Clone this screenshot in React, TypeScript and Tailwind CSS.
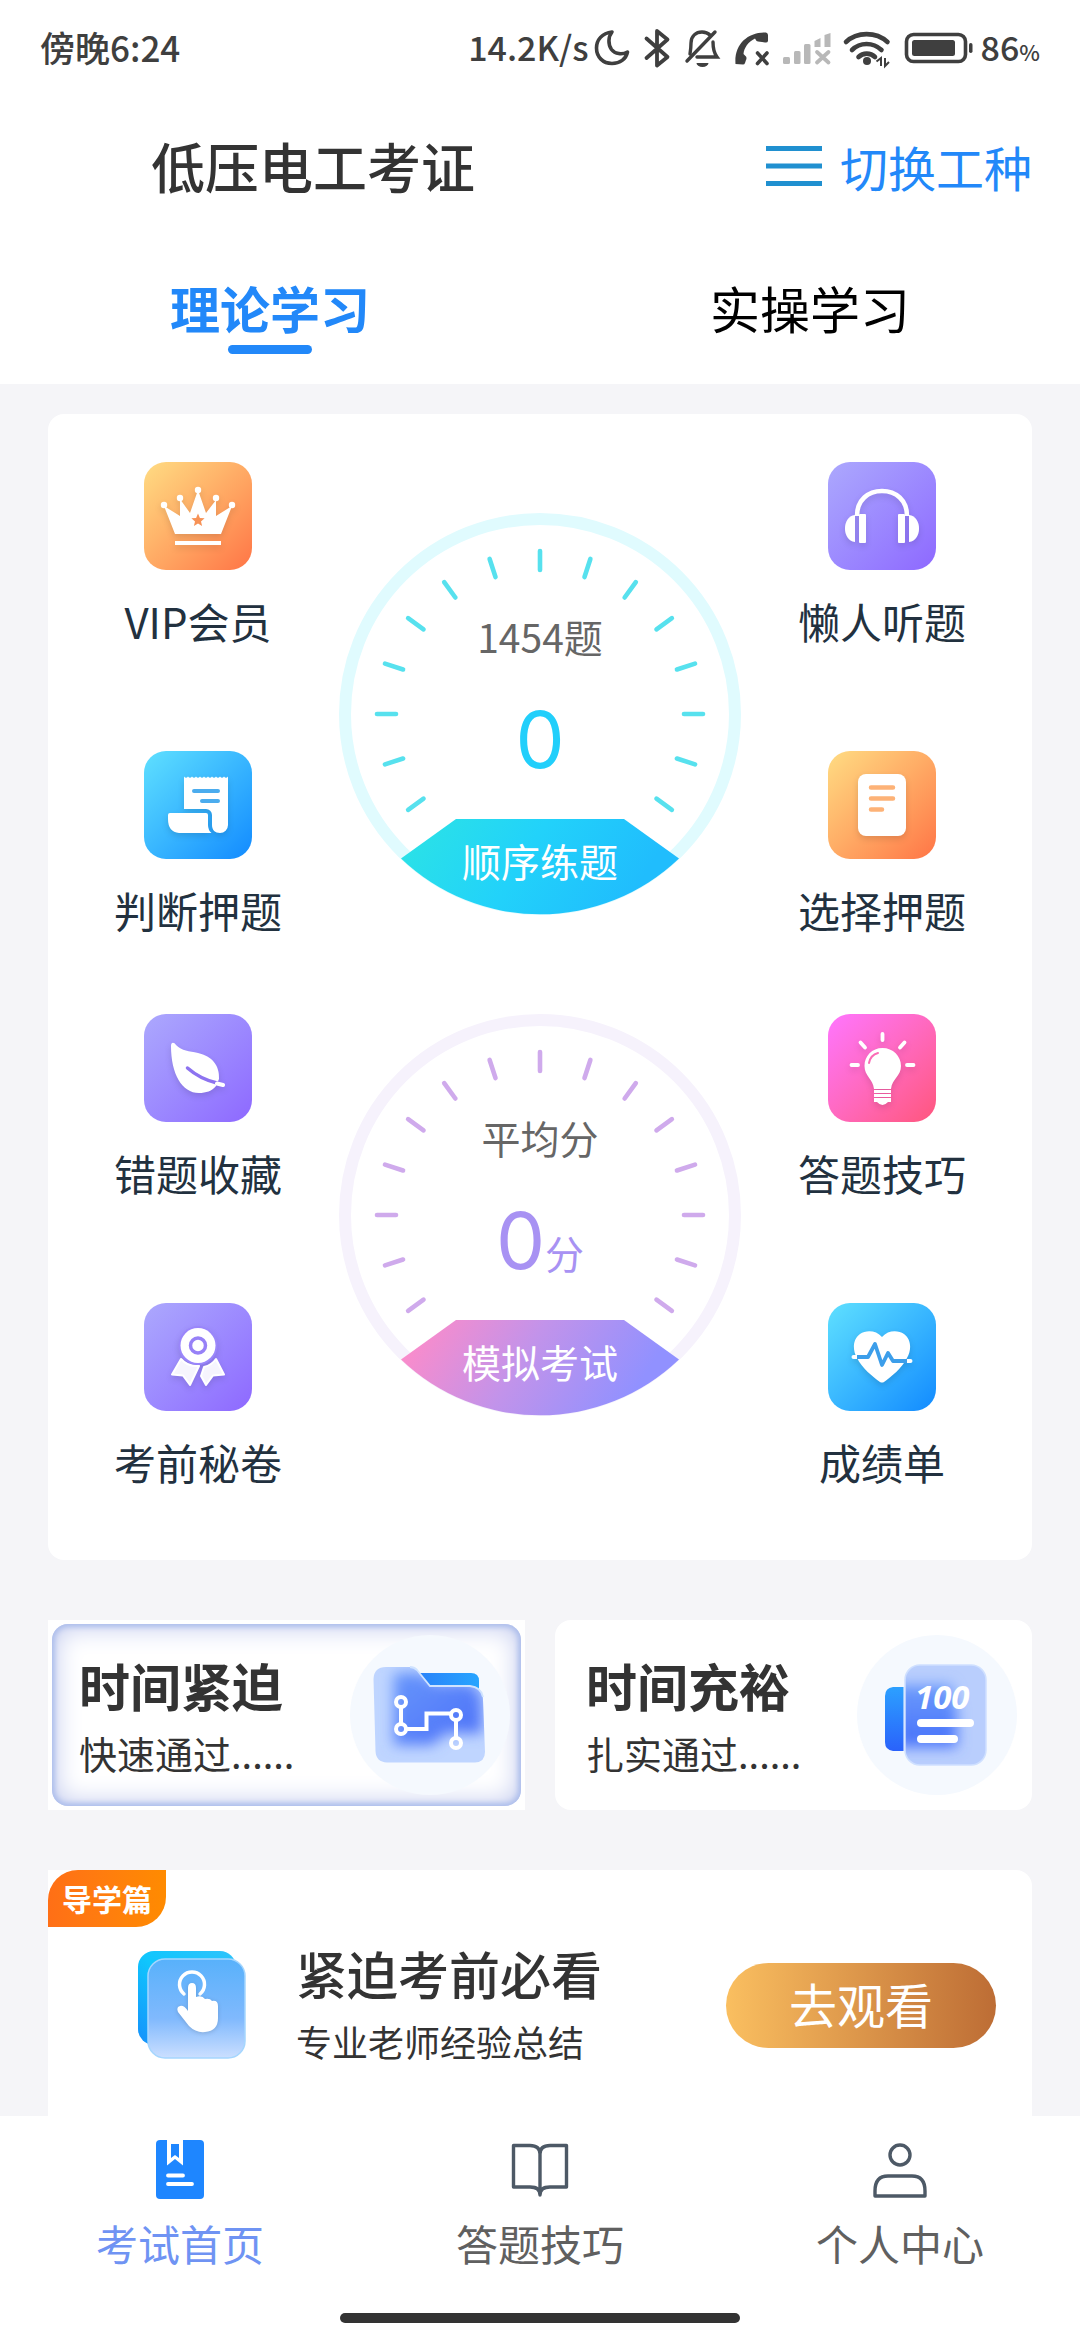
import type { ReactNode } from 'react';
import clsx from 'clsx';

interface Tile {
  label: string;
  background: string;
  glyph: ReactNode;
}

/* ---------- Tile glyphs, drawn on a 108 x 108 grid ---------- */

const CrownGlyph = (
  <>
    <g fill="#fff">
      <circle cx="20" cy="43" r="3.2" />
      <circle cx="36" cy="36" r="3.2" />
      <circle cx="54" cy="28" r="3.2" />
      <circle cx="72" cy="36" r="3.2" />
      <circle cx="88" cy="43" r="3.2" />
      <path d="M20 44 31 72H77L88 44 72 54V38L62 51 54 28 46 51 36 37V54Z" />
      <rect x="31" y="79" width="46" height="4" />
    </g>
    <path
      d="m54 51.5 1.9 4.4 4.7.4-3.6 3.1 1.1 4.6-4.1-2.4-4.1 2.4 1.1-4.6-3.6-3.1 4.7-.4Z"
      fill="#f79256"
    />
  </>
);

const TORN_EDGE = 'q2 2.5 4 0'.repeat(11);

const ReceiptGlyph = (
  <>
    <g fill="#fff">
      <path d={`M40 25.5${TORN_EDGE}V74a8 8 0 0 1-8 8c-5 0-8-3-8-8V64a6 6 0 0 0-6-6H40Z`} />
      <path d="M24 64q0-2 2-2H62q2 0 2 2V74q0 5 3.5 8H35Q24 81 24 68Z" />
    </g>
    <path d="M50 40H74M58 50H74" stroke="#4bacee" strokeWidth="4" strokeLinecap="round" />
  </>
);

const LeafGlyph = (
  <>
    <path
      d="M27 32c0-4 3-4 5-1 6 6 13 6 22 8C68 42 76 52 75 65L72 72C68 77 62 79 55 79 38 79 27 60 27 32Z"
      fill="#fff"
    />
    <path d="M43.5 54Q56 65 73 69" stroke="#8d73f0" strokeWidth="3.5" strokeLinecap="round" fill="none" />
    <path d="M73 69.5 79 71" stroke="#fff" strokeWidth="4" strokeLinecap="round" />
  </>
);

const MedalGlyph = (
  <>
    <g fill="#fff" stroke="#fff" strokeWidth="2" strokeLinejoin="round">
      <path d="M37 56 28 71.5 39 72.5 46 82 55 63Q44 64 37 56Z" fillOpacity=".92" />
      <path d="M72 56 80 71.5 69 72.5 62 82 57 73 60 64Q68 62 72 56Z" fillOpacity=".92" />
    </g>
    <circle cx="54" cy="42.5" r="19.5" fill="#9a86fb" />
    <circle cx="54" cy="42.5" r="17.5" fill="#fff" />
    <circle cx="54" cy="42.5" r="7.5" fill="none" stroke="#9781f7" strokeWidth="3.5" />
  </>
);

const HeadphoneGlyph = (
  <>
    <path d="M29 54C29 38 40 29 54 29S79 38 79 54" stroke="#fff" strokeWidth="4.5" fill="none" />
    <g fill="#fff">
      <path d="M27 53C20 54 17 60 17 66.5S20 79 27 80Z" />
      <rect x="31" y="52" width="7" height="29" rx="1" />
      <rect x="70" y="52" width="7" height="29" rx="1" />
      <path d="M81 53C88 54 91 60 91 66.5S88 79 81 80Z" />
    </g>
  </>
);

const PaperGlyph = (
  <>
    <rect x="30" y="23" width="48" height="62" rx="8" fill="#fff" />
    <path d="M43 36.5H65M43 47.5H65M43 58.5H54" stroke="#fdb277" strokeWidth="4.5" strokeLinecap="round" />
  </>
);

const BulbGlyph = (
  <>
    <g fill="#fff">
      <path d="M54.5 34C65 34 73 42 73 52 73 62 64 65 63 75H46C45 65 36.5 62 36.5 52 36.5 42 44 34 54.5 34Z" />
      <rect x="46" y="76" width="17" height="3" />
      <rect x="46" y="80" width="17" height="3" />
      <path d="M46 84H63V88H60Q54.5 94 49 88H46Z" />
    </g>
    <path
      d="M54.5 20V26M32.5 28.5 37 33.5M76.5 28.5 72 33.5M23.5 51H30M79 51H85.5"
      stroke="#fff"
      strokeWidth="3.8"
      strokeLinecap="round"
    />
    <path d="M41 49Q42.5 41 50 39" stroke="#fb6cb6" strokeWidth="2" strokeLinecap="round" fill="none" />
  </>
);

const HeartGlyph = (
  <>
    <path
      d="M54 34C60 27 70 27 76 31 83 36 84 46 79 55 74 65 63 74 56 79Q54 80 52 79C45 74 34 65 29 55 24 46 25 36 32 31 38 27 48 27 54 34Z"
      fill="#fff"
    />
    <path d="M25.5 54H30M79 58H82.5" stroke="#fff" strokeWidth="4" strokeLinecap="round" />
    <path d="M29 54H40L47 41 54 62 60 50 65 58H79" stroke="#3c9eea" strokeWidth="3.8" strokeLinejoin="round" fill="none" />
  </>
);

const ORANGE = 'from-[#ffdc83] to-[#ff7446]';
const BLUE = 'from-[#5fe0ff] to-[#128aff]';
const PURPLE = 'from-[#aca8fd] to-[#8e68ff]';
const PINK = 'from-[#ff75ff] to-[#ff557c]';

const LEFT_TILES: Tile[][] = [
  [
    { label: 'VIP会员', background: ORANGE, glyph: CrownGlyph },
    { label: '判断押题', background: BLUE, glyph: ReceiptGlyph },
  ],
  [
    { label: '错题收藏', background: PURPLE, glyph: LeafGlyph },
    { label: '考前秘卷', background: PURPLE, glyph: MedalGlyph },
  ],
];

const RIGHT_TILES: Tile[][] = [
  [
    { label: '懒人听题', background: PURPLE, glyph: HeadphoneGlyph },
    { label: '选择押题', background: ORANGE, glyph: PaperGlyph },
  ],
  [
    { label: '答题技巧', background: PINK, glyph: BulbGlyph },
    { label: '成绩单', background: BLUE, glyph: HeartGlyph },
  ],
];

function TileColumn({ groups }: Readonly<{ groups: Tile[][] }>) {
  return (
    <div className="flex w-48 flex-col gap-[73px]">
      {groups.map((group) => (
        <div key={group[0].label} className="flex flex-col gap-[99px]">
          {group.map((tile) => (
            <button key={tile.label} type="button" className="flex flex-col items-center gap-5">
              <span className={clsx('block size-[108px] rounded-[22px] bg-linear-to-br', tile.background)}>
                <svg viewBox="0 0 108 108" className="size-full drop-shadow-md" fill="none" aria-hidden="true">
                  {tile.glyph}
                </svg>
              </span>
              <span className="text-[42px] leading-[62px] whitespace-nowrap text-[#22313f]">{tile.label}</span>
            </button>
          ))}
        </div>
      ))}
    </div>
  );
}

/* ---------- Dials ---------- */

const TICKS = Array.from({ length: 15 }, (_, i) => (i - 7) * 18);

interface DialProps {
  id: string;
  caption: string;
  action: string;
  ring: string;
  tick: string;
  stops: [string, string, string];
  children: ReactNode;
}

function Dial({ id, caption, action, ring, tick, stops, children }: Readonly<DialProps>) {
  return (
    <button type="button" className="relative flex size-[402px] flex-col items-center pt-[93px]">
      <svg viewBox="-201 -201 402 402" className="absolute inset-0 size-full" aria-hidden="true">
        <defs>
          <linearGradient id={id} gradientUnits="userSpaceOnUse" x1="-110" y1="80" x2="80" y2="200">
            <stop offset="0" stopColor={stops[0]} />
            <stop offset=".5" stopColor={stops[1]} />
            <stop offset="1" stopColor={stops[2]} />
          </linearGradient>
        </defs>
        <circle r="195" fill="none" stroke={ring} strokeWidth="12" />
        {TICKS.map((angle) => (
          <path
            key={angle}
            d="M0-163V-144"
            transform={`rotate(${angle})`}
            stroke={tick}
            strokeWidth="4.6"
            strokeLinecap="round"
          />
        ))}
        <path d="M-84 105H84L139 144.5A201 201 0 0 1-139 144.5Z" fill={`url(#${id})`} />
      </svg>
      <span className="relative text-[39px] leading-[60px] text-[#666]">{caption}</span>
      <span className="relative mt-[14px] flex h-[120px] items-baseline leading-[120px]">{children}</span>
      <span className="relative mt-[30px] text-[39px] leading-[60px] text-white">{action}</span>
    </button>
  );
}

/* ---------- Status bar ---------- */

function StatusIcons() {
  return (
    <svg viewBox="592 26 384 44" className="h-11 w-96" fill="none" stroke="#3f3f3f" aria-hidden="true">
      {/* Moon */}
      <path
        d="M611 32C601 33 595.5 40 595.5 48 595.5 57 602 63.5 611 63.5 619 63.5 625 59 626.5 52 621 55 614 54 610.5 49.5 607 44.5 607 37 611 32Z"
        strokeWidth="3.6"
        strokeLinejoin="round"
      />
      {/* Bluetooth */}
      <path
        d="M645.5 38.5 666.5 57 656 65.5V31L666.5 39.5 645.5 58"
        strokeWidth="3.8"
        strokeLinejoin="round"
        strokeLinecap="round"
      />
      {/* Muted bell */}
      <path
        d="M689 54Q690 48 690 43C690 36 695 32 701 32 705 32 707 33 709 35M712 42C712 50 713 53 716 57H696"
        strokeWidth="3.4"
        strokeLinecap="round"
      />
      <path d="M714 32 686 61" strokeWidth="3.4" strokeLinecap="round" />
      <path d="M695.5 63H707.5A6 4 0 0 1 695.5 63Z" fill="#3f3f3f" stroke="none" />
      {/* Blocked call */}
      <path
        d="M734.5 64C733 44 747 32 765 32.5Q767 33 767 35V41Q766.5 43 764 42.5L757 41.5Q755 41 754 38.5C747 42 743 48 742.5 54L745 56.5Q746 58 745 60L744 63Q743.5 64.5 742 64.5Z"
        fill="#3f3f3f"
        stroke="none"
      />
      <path d="M756.5 53 766 63.5M766 53 756.5 63.5" strokeWidth="3.6" strokeLinecap="round" />
      {/* No signal */}
      <g fill="#b8b8b8" stroke="none">
        <rect x="782" y="57" width="7" height="7" rx="1.5" />
        <rect x="793" y="51" width="6.5" height="13" rx="1.5" />
        <rect x="803" y="44" width="6.5" height="20" rx="1.5" />
        <path d="M813.5 41 819.5 38V47H813.5ZM823.5 35 829.5 33V47H823.5Z" />
      </g>
      <path d="M816 52 827.5 62.5M827.5 52 816 62.5" stroke="#b8b8b8" strokeWidth="3.8" strokeLinecap="round" />
      {/* Wifi */}
      <path
        d="M845 42C856 31.5 875 31.5 886.5 42M851 50C859 42 872 42 880.5 50M857.5 57C862 52.5 869.5 52.5 874 57"
        strokeWidth="4.6"
        strokeLinecap="round"
      />
      <circle cx="866" cy="61" r="4" fill="#3f3f3f" stroke="none" />
      <path d="M880 66V58L875.5 61.5M884 58V66L888 62" strokeWidth="2" />
      {/* Battery */}
      <rect x="905.5" y="34.5" width="59" height="27" rx="7" strokeWidth="3.6" />
      <rect x="911" y="40" width="43" height="16" rx="2.5" fill="#3f3f3f" stroke="none" />
      <rect x="968" y="43" width="3.5" height="10" rx="1.7" fill="#3f3f3f" stroke="none" />
    </svg>
  );
}

function StatusBar() {
  return (
    <div className="flex h-[98px] items-start justify-between px-10 pt-[22px] leading-[50px] font-medium text-[#3f3f3f]">
      <span className="text-[35px]">傍晚6:24</span>
      <span className="flex items-start gap-1 text-[34px]">
        <span>14.2K/s</span>
        <span className="pt-1">
          <StatusIcons />
        </span>
        <span>
          86<span className="text-[22px] leading-none">%</span>
        </span>
      </span>
    </div>
  );
}

/* ---------- Plan cards ---------- */

function FolderArt() {
  return (
    <svg viewBox="0 0 160 160" className="size-40 shrink-0" fill="none" aria-hidden="true">
      <defs>
        <linearGradient id="folder-back" x1="0" y1="0" x2="1" y2="0">
          <stop offset="0" stopColor="#2a7df8" />
          <stop offset="1" stopColor="#27a5ff" />
        </linearGradient>
        <linearGradient id="folder-core" x1="0" y1="0" x2="1" y2="1">
          <stop offset="0" stopColor="#6796fb" />
          <stop offset="1" stopColor="#4b6ff8" />
        </linearGradient>
        <filter id="folder-glow" x="-50%" y="-50%" width="200%" height="200%">
          <feGaussianBlur stdDeviation="7" />
        </filter>
        <clipPath id="folder-front">
          <path d="M36 32H60Q64 32 67 35L80 51H120Q133 52 133 65L135 117Q135 127 125 127.5H37Q26 127 25.5 116L23.5 44Q24 32 36 32Z" />
        </clipPath>
      </defs>
      <circle cx="80" cy="80" r="80" fill="#f5f9fe" />
      <path d="M60 38H121Q129 38 129 46V60H60Z" fill="url(#folder-back)" />
      <g clipPath="url(#folder-front)">
        <rect x="20" y="28" width="120" height="104" fill="#bfd5ff" />
        <path d="M44 38H72L84 48H122L132 62V98H96L82 110H44Z" fill="url(#folder-core)" filter="url(#folder-glow)" />
      </g>
      <path d="M60 32Q64 32 67 35L80 51H120Q131 52 133 62" stroke="#cfe3ff" strokeWidth="1.8" />
      <g stroke="#fff" strokeWidth="4">
        <path d="M51 72V89M56 94H76.5V78.5H101M106 85V103" />
        <circle cx="51" cy="67" r="5" />
        <circle cx="51" cy="94" r="5" />
        <circle cx="106" cy="80" r="5" />
        <circle cx="106" cy="108" r="5" />
      </g>
    </svg>
  );
}

function ScoreArt() {
  return (
    <svg viewBox="0 0 160 160" className="size-40 shrink-0" fill="none" aria-hidden="true">
      <defs>
        <linearGradient id="score-back" x1="0" y1="0" x2="0" y2="1">
          <stop offset="0" stopColor="#2ca0ff" />
          <stop offset="1" stopColor="#2a62fb" />
        </linearGradient>
        <linearGradient id="score-core" x1="0" y1="0" x2="0" y2="1">
          <stop offset="0" stopColor="#6c9bfb" />
          <stop offset="1" stopColor="#4670fa" />
        </linearGradient>
        <filter id="score-glow" x="-50%" y="-50%" width="200%" height="200%">
          <feGaussianBlur stdDeviation="7" />
        </filter>
        <clipPath id="score-front">
          <rect x="48" y="30" width="81" height="100" rx="15" />
        </clipPath>
      </defs>
      <circle cx="80" cy="80" r="80" fill="#f5f9fe" />
      <path d="M36 52H46.5V116H36Q28 115 28 107V61Q28 53 36 52Z" fill="url(#score-back)" />
      <g clipPath="url(#score-front)">
        <rect x="46" y="28" width="86" height="104" fill="#b9cefd" />
        <path d="M38 50H94L100 76V112H38Z" fill="url(#score-core)" filter="url(#score-glow)" />
      </g>
      <rect x="48" y="30" width="81" height="100" rx="15" stroke="#cfe0ff" strokeWidth="1.5" />
      <text x="58" y="74" fill="#fff" className="font-['Open_Sans',sans-serif] text-[33px] font-bold italic">
        100
      </text>
      <path d="M64 88H113M64 104H97" stroke="#fff" strokeWidth="8" strokeLinecap="round" />
    </svg>
  );
}

interface PlanCardProps {
  title: string;
  hint: string;
  art: ReactNode;
  active?: boolean;
}

function PlanCard({ title, hint, art, active }: Readonly<PlanCardProps>) {
  return (
    <button type="button" className={clsx('flex-1 bg-white p-1 text-left', !active && 'rounded-2xl')}>
      <span
        className={clsx(
          'flex items-center justify-between rounded-2xl py-[11px] pr-[11px] pl-[27px]',
          active && 'shadow-[inset_0_0_5px_3px_#aebfec,inset_0_0_26px_4px_#c3cbee]',
        )}
      >
        <span className="flex flex-col pt-1">
          <span className="text-[51px] leading-[72px] font-bold text-[#333]">{title}</span>
          <span className="text-[38px] leading-[64px] text-[#333]">{hint}</span>
        </span>
        {art}
      </span>
    </button>
  );
}

/* ---------- Guide card ---------- */

function TapArt() {
  return (
    <svg viewBox="0 0 108 108" className="size-[108px] shrink-0" fill="none" aria-hidden="true">
      <defs>
        <linearGradient id="tap-back" x1="1" y1="0" x2="0" y2="1">
          <stop offset="0" stopColor="#2fc3fb" />
          <stop offset=".5" stopColor="#10c6fd" />
          <stop offset="1" stopColor="#1590fb" />
        </linearGradient>
        <linearGradient id="tap-front" x1="0" y1="0" x2="0" y2="1">
          <stop offset="0" stopColor="#58b1fb" />
          <stop offset=".6" stopColor="#80b9fd" />
          <stop offset="1" stopColor="#cbdfff" />
        </linearGradient>
      </defs>
      <rect x="0" y="0" width="98" height="94" rx="16" fill="url(#tap-back)" />
      <rect x="10" y="8" width="97" height="99" rx="17" fill="url(#tap-front)" stroke="#a5d6fe" strokeWidth="1.5" />
      <path d="M46 43A12.5 12.5 0 1 1 62 43" stroke="#fff" strokeWidth="3.5" strokeLinecap="round" />
      <path
        d="M50 37Q50 32 54 32T58 37V46Q64 44 67 48 72 47 74 50 80 49 80 55V67Q80 80 67 81 58 82 51 75L40 61Q38 56 42 55 46 54 50 60Z"
        fill="#fff"
        className="drop-shadow-sm"
      />
    </svg>
  );
}

function GuideCard() {
  return (
    <section className="flex flex-col rounded-2xl rounded-tl-none bg-white pb-20">
      <span className="self-start rounded-tl-[30px] rounded-br-[30px] bg-linear-to-r from-[#ff6f16] to-[#ff8b00] px-[14px] text-[30px] leading-[57px] font-bold text-white">
        导学篇
      </span>
      <div className="mt-[10px] flex items-center pr-9 pl-[90px]">
        <TapArt />
        <div className="ml-[50px] flex flex-1 flex-col">
          <h2 className="text-[51px] leading-[72px] font-medium text-[#333]">紧迫考前必看</h2>
          <p className="text-[36px] leading-[64px] text-[#333]">专业老师经验总结</p>
        </div>
        <button
          type="button"
          className="h-[85px] w-[270px] rounded-full bg-linear-to-r from-[#fabf60] to-[#bd6d35] pb-1 text-[48px] leading-[80px] text-white"
        >
          去观看
        </button>
      </div>
    </section>
  );
}

/* ---------- Bottom navigation ---------- */

const NAV_ITEMS = [
  {
    label: '考试首页',
    active: true,
    icon: (
      <>
        <rect x="6" y="0" width="48" height="59" rx="4" fill="#1e86ff" />
        <path d="M17 0H33V25.5L25 19 17 25.5Z" fill="#fff" />
        <path d="M21 4H29V18L25 15 21 18Z" fill="#1e86ff" />
        <path d="M18 35.5H33M18 44H42" stroke="#fff" strokeWidth="3.8" strokeLinecap="round" />
      </>
    ),
  },
  {
    label: '答题技巧',
    active: false,
    icon: (
      <path
        d="M30 53V14Q30 5.5 20 5.5H3.5V47H20Q30 47 30 55Q30 47 40 47H56.5V5.5H40Q30 5.5 30 14"
        stroke="#4d5966"
        strokeWidth="3.4"
        strokeLinejoin="round"
      />
    ),
  },
  {
    label: '个人中心',
    active: false,
    icon: (
      <g stroke="#4d5966" strokeWidth="3.4" strokeLinejoin="round">
        <circle cx="30" cy="15" r="10" />
        <path d="M5 56V51Q5 36 18 36H42Q55 36 55 51V56Z" />
      </g>
    ),
  },
];

function BottomNav() {
  return (
    <nav className="bg-white pt-6 pb-[17px]">
      <div className="grid grid-cols-3">
        {NAV_ITEMS.map((item) => (
          <a key={item.label} href="#" className="flex flex-col items-center gap-[13px]">
            <svg viewBox="0 0 60 60" className="size-15" fill="none" aria-hidden="true">
              {item.icon}
            </svg>
            <span className={clsx('text-[42px] leading-[60px]', item.active ? 'text-[#6f93f3]' : 'text-[#606060]')}>
              {item.label}
            </span>
          </a>
        ))}
      </div>
      <div className="mx-auto mt-10 h-[10px] w-[37%] rounded-full bg-[#333]" />
    </nav>
  );
}

export default function App() {
  return (
    <div className="flex h-screen flex-col bg-[#f5f5f8] font-['Noto_Sans_CJK_SC',sans-serif]">
      <header className="bg-white">
        <StatusBar />
        <div className="flex h-[140px] items-center justify-between pr-12 pb-1 pl-[151px]">
          <h1 className="text-[54px] leading-[80px] font-medium text-[#333]">低压电工考证</h1>
          <button type="button" className="flex items-center gap-[18px] text-[48px] leading-[70px] text-[#2288f9]">
            <svg viewBox="0 0 56 40" className="h-10 w-14" aria-hidden="true">
              <path d="M0 2.5H56M0 20H56M0 37.5H56" stroke="#2090d0" strokeWidth="5" />
            </svg>
            切换工种
          </button>
        </div>
        <div className="grid grid-cols-2 pt-[37px] pb-[30px] text-[50px] leading-[64px]">
          <button type="button" className="flex flex-col items-center gap-[6px] font-bold text-[#2288f9]">
            理论学习
            <span className="h-[9px] w-[84px] rounded-full bg-[#2288f9]" />
          </button>
          <button type="button" className="flex flex-col items-center text-black">
            实操学习
          </button>
        </div>
      </header>

      <main className="flex min-h-0 flex-1 flex-col gap-[60px] overflow-y-auto px-12 pt-[30px] [scrollbar-width:none]">
        <section className="flex shrink-0 items-start justify-between rounded-2xl bg-white px-[54px] pt-12 pb-[67px]">
          <TileColumn groups={LEFT_TILES} />
          <div className="-mx-6 flex flex-col gap-[99px] pt-[51px]">
            <Dial
              id="practice"
              caption="1454题"
              action="顺序练题"
              ring="#e0fbfe"
              tick="#57e1ee"
              stops={['#2be2e6', '#22d2fa', '#20bdfd']}
            >
              <span className="font-['Inter',sans-serif] text-[78px] text-[#22cffb]">0</span>
            </Dial>
            <Dial
              id="exam"
              caption="平均分"
              action="模拟考试"
              ring="#f6f2fc"
              tick="#cfaaec"
              stops={['#ff8bc8', '#c293ea', '#9191ff']}
            >
              <span className="font-['Inter',sans-serif] text-[78px] text-[#a892f3]">0</span>
              <span className="text-[39px] text-[#a892f3]">分</span>
            </Dial>
          </div>
          <TileColumn groups={RIGHT_TILES} />
        </section>

        <section className="flex shrink-0 gap-[30px]">
          <PlanCard title="时间紧迫" hint="快速通过......" art={<FolderArt />} active />
          <PlanCard title="时间充裕" hint="扎实通过......" art={<ScoreArt />} />
        </section>

        <GuideCard />
      </main>

      <BottomNav />
    </div>
  );
}
